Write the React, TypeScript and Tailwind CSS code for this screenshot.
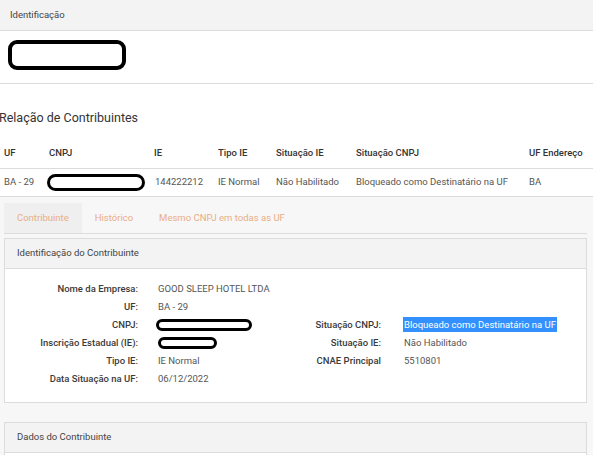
import React from "react";

const Oval = ({ w, h, t = 3, r = "rounded-full" }: { w: number; h: number; t?: number; r?: string }) => (
  <span
    className={`inline-block border-black bg-white ${r}`}
    style={{ width: w, height: h, borderWidth: t }}
  />
);

const Row = ({ label, children }: { label: string; children?: React.ReactNode }) => (
  <>
    <div className="h-[18px] flex items-center justify-end whitespace-nowrap font-medium text-[#3a3a3a]">{label}</div>
    <div className="h-[18px] flex items-center pl-5 whitespace-nowrap text-[#555]">{children}</div>
  </>
);

export default function App() {
  const cols = "grid grid-cols-[45px_105px_64px_58px_80px_173px_1fr] whitespace-nowrap";
  return (
    <div className="w-[593px] h-[455px] overflow-hidden bg-[#f7f7f7] text-[9.5px]" style={{ fontFamily: "Roboto, 'Liberation Sans', sans-serif" }}>
      <div className="bg-white">
        <div className="h-[31px] bg-[#f3f3f3] border-b border-[#dcdcdc] flex items-center pl-[10px] text-[#444]">Identificação</div>
        <div className="h-[53px] border-b border-[#dcdcdc] pl-[8px] pt-[9px]">
          <Oval w={118} h={30} t={4} r="rounded-[9px]" />
        </div>
        <div className="h-[54px] flex items-end pb-[11px] -ml-[1px] text-[12.5px] leading-[18px] text-[#333]">Relação de Contribuintes</div>
        <div className={`${cols} h-[31px] items-center border-b border-[#dcdcdc] font-medium text-[#333]`}>
          <div className="pl-1">UF</div>
          <div className="pl-1">CNPJ</div>
          <div className="pl-1">IE</div>
          <div className="pl-1">Tipo IE</div>
          <div className="pl-1">Situação IE</div>
          <div className="pl-1">Situação CNPJ</div>
          <div className="pl-1">UF Endereço</div>
        </div>
        <div className={`${cols} h-[28px] items-center border-b border-[#dcdcdc] text-[#555]`}>
          <div className="pl-1">BA - 29</div>
          <div className="pl-[2px] flex items-center"><Oval w={98} h={17} t={3} /></div>
          <div className="pl-[5px]">144222212</div>
          <div className="pl-1">IE Normal</div>
          <div className="pl-1">Não Habilitado</div>
          <div className="pl-1">Bloqueado como Destinatário na UF</div>
          <div className="pl-1">BA</div>
        </div>
      </div>
      <div className="pl-[4px] pr-[6px] pt-[6px]">
        <div className="flex h-[31px] border-b border-[#dcdcdc] text-[#e9ae84] whitespace-nowrap">
          <div className="bg-[#efefef] px-[13px] flex items-center">Contribuinte</div>
          <div className="px-[13px] flex items-center">Histórico</div>
          <div className="px-[13px] flex items-center">Mesmo CNPJ em todas as UF</div>
        </div>
        <div className="mt-[4px] border border-[#dcdcdc] bg-white">
          <div className="h-[30px] bg-[#f3f3f3] border-b border-[#dcdcdc] flex items-center pl-[12px] text-[#444]">Identificação do Contribuinte</div>
          <div className="pt-[11px] pb-[14px] grid grid-cols-[133px_143px_100px_1fr]">
            <Row label="Nome da Empresa:">GOOD SLEEP HOTEL LTDA</Row>
            <div /><div />
            <Row label="UF:">BA - 29</Row>
            <div /><div />
            <Row label="CNPJ:"><span className="-ml-[2px] flex"><Oval w={96} h={12} t={3} /></span></Row>
            <Row label="Situação CNPJ:"><span className="pl-[2px]"><span className="bg-[#3390ff] text-white px-[1px] py-[2px]">Bloqueado como Destinatário na UF</span></span></Row>
            <Row label="Inscrição Estadual (IE):"><span className="flex"><Oval w={59} h={12} t={3} /></span></Row>
            <Row label="Situação IE:"><span className="pl-[3px]">Não Habilitado</span></Row>
            <Row label="Tipo IE:">IE Normal</Row>
            <Row label="CNAE Principal"><span className="pl-[3px]">5510801</span></Row>
            <Row label="Data Situação na UF:">06/12/2022</Row>
            <div /><div />
          </div>
        </div>
        <div className="mt-[19px] border border-[#dcdcdc] bg-white">
          <div className="h-[30px] bg-[#f3f3f3] border-b border-[#dcdcdc] flex items-center pl-[12px] text-[#444]">Dados do Contribuinte</div>
          <div className="h-[40px]" />
        </div>
      </div>
    </div>
  );
}
